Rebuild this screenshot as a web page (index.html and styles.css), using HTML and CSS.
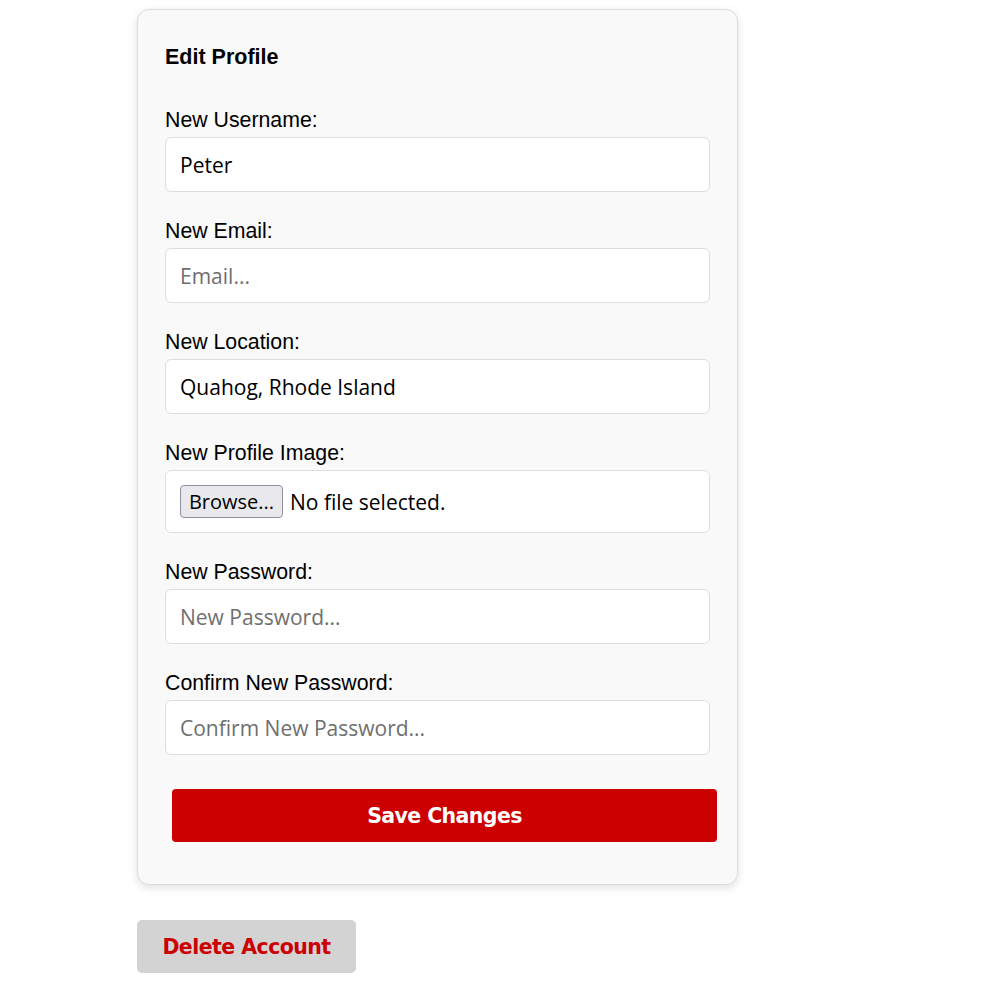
FILE: index.html
```html
<!DOCTYPE html>
<html lang="en">
<head>
<meta charset="utf-8">
<title>Edit Profile</title>
<link rel="stylesheet" href="styles.css">
</head>
<body>
<main class="page">
  <section class="card">
    <h2 class="title">Edit Profile</h2>
    <form class="form">
      <div class="field">
        <label class="label" for="username">New Username:</label>
        <input class="input" id="username" type="text" value="Peter">
      </div>
      <div class="field">
        <label class="label" for="email">New Email:</label>
        <input class="input" id="email" type="email" placeholder="Email...">
      </div>
      <div class="field">
        <label class="label" for="location">New Location:</label>
        <input class="input" id="location" type="text" value="Quahog, Rhode Island">
      </div>
      <div class="field">
        <label class="label">New Profile Image:</label>
        <div class="file-field">
          <span class="browse">Browse...</span>
          <span class="file-text">No file selected.</span>
        </div>
      </div>
      <div class="field">
        <label class="label" for="password">New Password:</label>
        <input class="input" id="password" type="password" placeholder="New Password...">
      </div>
      <div class="field">
        <label class="label" for="confirm">Confirm New Password:</label>
        <input class="input" id="confirm" type="password" placeholder="Confirm New Password...">
      </div>
      <button type="button" class="save">Save Changes</button>
    </form>
  </section>
  <button type="button" class="delete">Delete Account</button>
</main>
</body>
</html>
```
FILE: styles.css
```css
html, body {
  margin: 0;
  padding: 0;
  background: #ffffff;
}

body {
  font-family: "Liberation Sans", Arial, sans-serif;
  color: #000;
}

.page {
  padding: 9px 0 0 137px;
  display: flex;
  flex-direction: column;
  align-items: flex-start;
}

.card {
  box-sizing: border-box;
  width: 601px;
  background: #f9f9f9;
  border: 1px solid #dcdcdc;
  border-radius: 12px;
  box-shadow: 0 3px 8px rgba(0, 0, 0, 0.12);
  padding: 32px 27px 42px 27px;
}

.title {
  margin: 0;
  font-size: 21.5px;
  line-height: 30px;
  font-weight: bold;
}

.form {
  display: flex;
  flex-direction: column;
  margin-top: 36px;
}

.field {
  display: flex;
  flex-direction: column;
  margin-bottom: 27px;
}

.label {
  font-size: 21.3px;
  line-height: 25px;
  margin-bottom: 4px;
}

.input {
  box-sizing: border-box;
  width: 545px;
  height: 55px;
  margin: 0;
  padding: 0 14px;
  border: 1px solid #dedede;
  border-radius: 6px;
  background: #fff;
  font-family: "Open Sans", "DejaVu Sans", sans-serif;
  font-size: 21px;
  color: #000;
  outline: none;
}

.input::placeholder {
  color: #6f6f6f;
}

.file-field {
  box-sizing: border-box;
  width: 545px;
  height: 63px;
  border: 1px solid #dedede;
  border-radius: 6px;
  background: #fff;
  display: flex;
  align-items: center;
  padding: 0 14px;
  gap: 7px;
  font-family: "Open Sans", "DejaVu Sans", sans-serif;
  font-size: 21px;
}

.browse {
  box-sizing: border-box;
  height: 33px;
  width: 103px;
  display: flex;
  align-items: center;
  justify-content: center;
  background: #e9e9ed;
  border: 1px solid #8f8f9d;
  border-radius: 4px;
  color: #000;
  font-size: 20px;
}

.file-text {
  color: #000;
}

.save {
  box-sizing: border-box;
  width: 545px;
  height: 53px;
  margin: 7px 0 0 7px;
  background: #cc0000;
  color: #fff;
  border: none;
  border-radius: 4px;
  font-family: "DejaVu Sans", Verdana, sans-serif;
  font-weight: bold;
  font-size: 20.5px;
  letter-spacing: -0.6px;
}

.delete {
  box-sizing: border-box;
  width: 219px;
  height: 53px;
  margin-top: 35px;
  background: #d3d3d3;
  color: #cc0000;
  border: none;
  border-radius: 5px;
  font-family: "DejaVu Sans", Verdana, sans-serif;
  font-weight: bold;
  font-size: 20.5px;
  letter-spacing: -0.55px;
}
```
